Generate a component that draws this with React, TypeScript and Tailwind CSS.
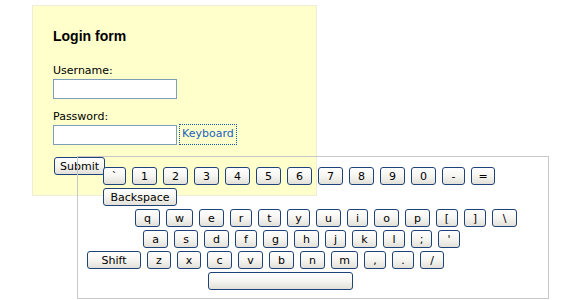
const font = { fontFamily: '"DejaVu Sans", Verdana, sans-serif' };

type Key = [string, string];

const rows: { pad: string; keys: Key[] }[] = [
  {
    pad: "pl-[25px]",
    keys: [
      ["`", "w-[23px]"],
      ["1", "w-[25px]"],
      ["2", "w-[25px]"],
      ["3", "w-[25px]"],
      ["4", "w-[25px]"],
      ["5", "w-[25px]"],
      ["6", "w-[25px]"],
      ["7", "w-[25px]"],
      ["8", "w-[25px]"],
      ["9", "w-[25px]"],
      ["0", "w-[25px]"],
      ["-", "w-[23px]"],
      ["=", "w-[24px]"],
    ],
  },
  { pad: "pl-[25px]", keys: [["Backspace", "w-[74px]"]] },
  {
    pad: "pl-[57px]",
    keys: [
      ["q", "w-[25px]"],
      ["w", "w-[27px]"],
      ["e", "w-[25px]"],
      ["r", "w-[22px]"],
      ["t", "w-[23px]"],
      ["y", "w-[23px]"],
      ["u", "w-[25px]"],
      ["i", "w-[21px]"],
      ["o", "w-[25px]"],
      ["p", "w-[25px]"],
      ["[", "w-[22px]"],
      ["]", "w-[22px]"],
      ["\\", "w-[25px]"],
    ],
  },
  {
    pad: "pl-[65px]",
    keys: [
      ["a", "w-[25px]"],
      ["s", "w-[24px]"],
      ["d", "w-[25px]"],
      ["f", "w-[22px]"],
      ["g", "w-[25px]"],
      ["h", "w-[25px]"],
      ["j", "w-[21px]"],
      ["k", "w-[25px]"],
      ["l", "w-[22px]"],
      [";", "w-[21px]"],
      ["'", "w-[22px]"],
    ],
  },
  {
    pad: "pl-[9px]",
    keys: [
      ["Shift", "w-[54px]"],
      ["z", "w-[24px]"],
      ["x", "w-[24px]"],
      ["c", "w-[25px]"],
      ["v", "w-[25px]"],
      ["b", "w-[25px]"],
      ["n", "w-[25px]"],
      ["m", "w-[27px]"],
      [",", "w-[22px]"],
      [".", "w-[22px]"],
      ["/", "w-[24px]"],
    ],
  },
  { pad: "pl-[130px]", keys: [["", "w-[145px]"]] },
];

const keyCls =
  "h-[18px] flex items-center justify-center border border-[#1f4378] rounded-[3px] bg-gradient-to-b from-white via-[#f6f5f1] to-[#e2e0d8] text-[11px] text-black leading-none";

function Keyboard() {
  return (
    <div className="absolute left-[77px] top-[156px] w-[472px] h-[143px] border border-[#c8c8c8] pt-[10px] flex flex-col gap-[3px]" style={font}>
      {rows.map((row, i) => (
        <div key={i} className={`flex gap-[6px] ${row.pad}`}>
          {row.keys.map(([label, w], j) => (
            <div key={j} className={`${keyCls} ${w}`}>
              {label}
            </div>
          ))}
        </div>
      ))}
    </div>
  );
}

export default function App() {
  return (
    <div className="relative w-[570px] h-[300px] bg-white overflow-hidden">
      <div className="ml-[32px] mt-[5px] w-[285px] h-[191px] bg-[#ffffcc] border border-[#eeeed8] pl-[20px] pt-[22px]" style={font}>
        <h1 className="text-[14px] font-bold leading-[17px] text-black" style={{ fontFamily: '"Liberation Sans", Arial, sans-serif' }}>
          Login form
        </h1>
        <div className="mt-[19px] text-[11px] leading-[13px] text-black">Username:</div>
        <div className="mt-[2px] w-[124px] h-[20px] border border-[#7f9db9] bg-white" />
        <div className="mt-[11px] text-[11px] leading-[13px] text-black">Password:</div>
        <div className="mt-[1px] flex items-center">
          <div className="w-[124px] h-[20px] border border-[#7f9db9] bg-white" />
          <span className="ml-[2px] h-[21px] px-[2px] flex items-center border border-dotted border-[#1a55b0] text-[11px] text-[#1a5fc0]">
            Keyboard
          </span>
        </div>
        <button className={`mt-[12px] ml-[1px] w-[51px] ${keyCls}`} style={font}>
          Submit
        </button>
      </div>
      <Keyboard />
    </div>
  );
}
